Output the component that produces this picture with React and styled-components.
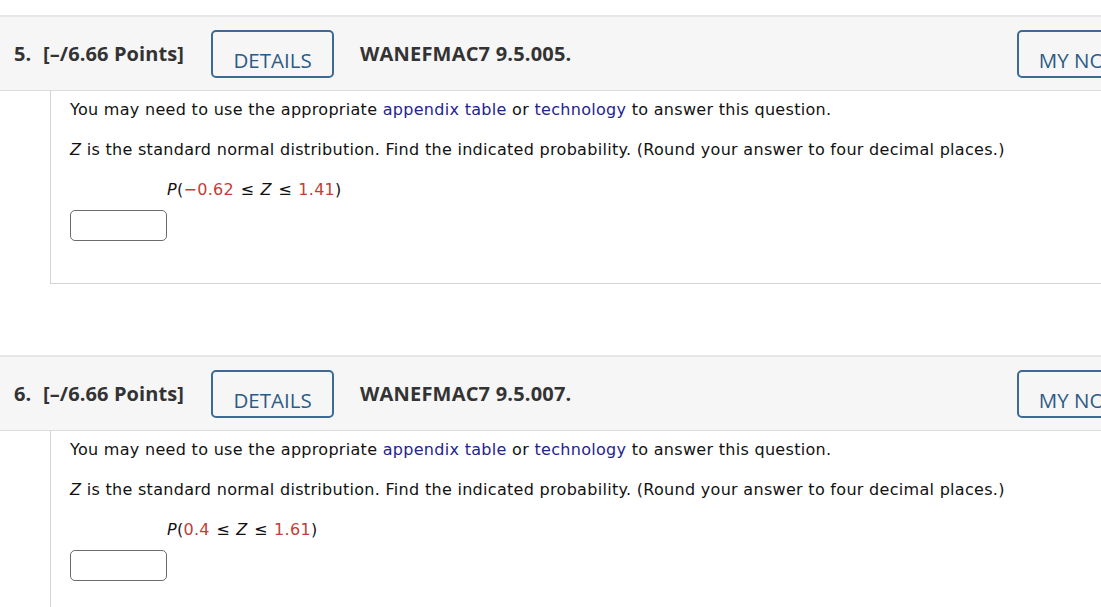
import React from "react";
import styled, { createGlobalStyle } from "styled-components";

const Global = createGlobalStyle`
  html, body { margin: 0; padding: 0; background: #fff; overflow: hidden; }
  body { font-family: "DejaVu Sans", Verdana, sans-serif; }
`;

const Page = styled.div`
  width: 1175px;
  padding-top: 15px;
`;

const Question = styled.section`
  margin-bottom: ${(p) => (p.$last ? "0" : "71px")};
`;

const Header = styled.div`
  display: flex;
  align-items: center;
  height: 73px;
  padding: 0 14px 0 14px;
  background: #f6f6f6;
  border-top: 2px solid #e6e6e6;
  border-bottom: 1px solid #dcdcdc;
  font-family: "Open Sans", sans-serif;
  color: #333;
`;

const Num = styled.span`
  font-weight: 700;
  font-size: 20px;
  width: 29px;
`;

const Points = styled.span`
  font-weight: 700;
  font-size: 20px;
  letter-spacing: 0.1px;
  margin-right: 27px;
`;

const OutlineButton = styled.button`
  box-sizing: border-box;
  flex: none;
  height: 48px;
  width: ${(p) => p.$w}px;
  padding: 13px 0 0;
  border: 2px solid #3c6a95;
  border-radius: 5px;
  background: transparent;
  color: #2d5b86;
  font-family: "Open Sans", sans-serif;
  font-size: 20.5px;
  text-align: center;
  white-space: nowrap;
`;

const Code = styled.span`
  font-weight: 700;
  font-size: 20px;
  letter-spacing: 0.2px;
  margin-left: 26px;
`;

const Spacer = styled.div`
  flex: 1;
`;

const Body = styled.div`
  margin-left: 50px;
  border-left: 1px solid #d4d4d4;
  border-bottom: ${(p) => (p.$open ? "none" : "1px solid #d4d4d4")};
  padding: 9px 0 ${(p) => (p.$open ? "60px" : "42px")} 19px;
  font-size: 16px;
  letter-spacing: 0.3px;
  color: #111;
`;

const Para = styled.p`
  margin: 0 0 20px;
  line-height: 20px;
`;

const Link = styled.span`
  color: #23238f;
`;

const Math = styled.p`
  margin: 0 0 10px 97px;
  line-height: 20px;
  word-spacing: 1px;
`;

const Var = styled.i`
  font-style: oblique;
`;

const Num2 = styled.span`
  color: #c53d36;
`;

const AnswerBox = styled.div`
  box-sizing: border-box;
  width: 97px;
  height: 31px;
  border: 1.5px solid #6c6c6c;
  border-radius: 5px;
  background: #fff;
`;

function Q({ n, code, lo, hi, last }) {
  return (
    <Question $last={last}>
      <Header>
        <Num>{n}.</Num>
        <Points>[–/6.66 Points]</Points>
        <OutlineButton $w={123}>DETAILS</OutlineButton>
        <Code>{code}</Code>
        <Spacer />
        <OutlineButton $w={144}>MY NOTES</OutlineButton>
      </Header>
      <Body $open={last}>
        <Para>
          You may need to use the appropriate <Link>appendix table</Link> or{" "}
          <Link>technology</Link> to answer this question.
        </Para>
        <Para>
          <Var>Z</Var> is the standard normal distribution. Find the indicated
          probability. (Round your answer to four decimal places.)
        </Para>
        <Math>
          <Var>P</Var>(<Num2>{lo}</Num2> ≤ <Var>Z</Var> ≤ <Num2>{hi}</Num2>)
        </Math>
        <AnswerBox />
      </Body>
    </Question>
  );
}

export default function App() {
  return (
    <>
      <Global />
      <Page>
        <Q n={5} code="WANEFMAC7 9.5.005." lo="−0.62" hi="1.41" />
        <Q n={6} code="WANEFMAC7 9.5.007." lo="0.4" hi="1.61" last />
      </Page>
    </>
  );
}
